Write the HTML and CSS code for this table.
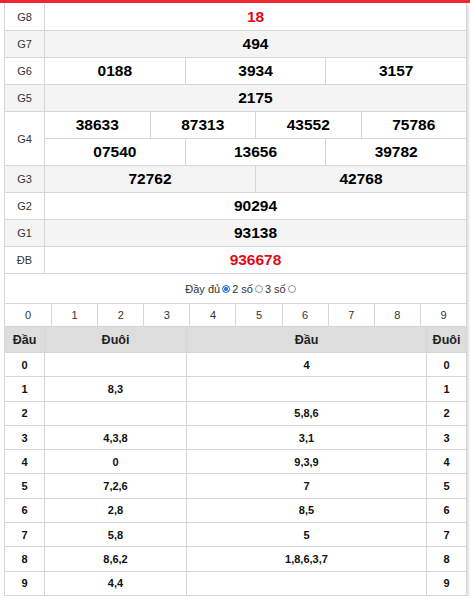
FILE: index.html
```html
<!DOCTYPE html>
<html lang="vi">
<head>
<meta charset="utf-8">
<title>Kết quả</title>
<link rel="stylesheet" href="styles.css">
</head>
<body>
<div class="topbar"></div>
<div class="box">
  <div class="prizes">
    <div class="prize">
      <div class="lbl">G8</div>
      <div class="vals"><div class="line"><div class="num red">18</div></div></div>
    </div>
    <div class="prize alt">
      <div class="lbl">G7</div>
      <div class="vals"><div class="line"><div class="num">494</div></div></div>
    </div>
    <div class="prize">
      <div class="lbl">G6</div>
      <div class="vals"><div class="line"><div class="num">0188</div><div class="num">3934</div><div class="num">3157</div></div></div>
    </div>
    <div class="prize alt">
      <div class="lbl">G5</div>
      <div class="vals"><div class="line"><div class="num">2175</div></div></div>
    </div>
    <div class="prize">
      <div class="lbl">G4</div>
      <div class="vals">
        <div class="line"><div class="num">38633</div><div class="num">87313</div><div class="num">43552</div><div class="num">75786</div></div>
        <div class="line"><div class="num">07540</div><div class="num">13656</div><div class="num">39782</div></div>
      </div>
    </div>
    <div class="prize alt">
      <div class="lbl">G3</div>
      <div class="vals"><div class="line"><div class="num">72762</div><div class="num">42768</div></div></div>
    </div>
    <div class="prize">
      <div class="lbl">G2</div>
      <div class="vals"><div class="line"><div class="num">90294</div></div></div>
    </div>
    <div class="prize alt">
      <div class="lbl">G1</div>
      <div class="vals"><div class="line"><div class="num">93138</div></div></div>
    </div>
    <div class="prize">
      <div class="lbl">ĐB</div>
      <div class="vals"><div class="line"><div class="num red">936678</div></div></div>
    </div>
  </div>

  <div class="options">
    <span>Đầy đủ</span><span class="radio on"></span><span>2 số</span><span class="radio"></span><span>3 số</span><span class="radio"></span>
  </div>

  <div class="digits">
    <div class="d">0</div><div class="d">1</div><div class="d">2</div><div class="d">3</div><div class="d">4</div>
    <div class="d">5</div><div class="d">6</div><div class="d">7</div><div class="d">8</div><div class="d">9</div>
  </div>

  <div class="lt">
    <div class="lt-row head"><div class="c">Đầu</div><div class="c">Đuôi</div><div class="c">Đầu</div><div class="c">Đuôi</div></div>
    <div class="lt-row"><div class="c">0</div><div class="c"></div><div class="c">4</div><div class="c">0</div></div>
    <div class="lt-row"><div class="c">1</div><div class="c">8,3</div><div class="c"></div><div class="c">1</div></div>
    <div class="lt-row"><div class="c">2</div><div class="c"></div><div class="c">5,8,6</div><div class="c">2</div></div>
    <div class="lt-row"><div class="c">3</div><div class="c">4,3,8</div><div class="c">3,1</div><div class="c">3</div></div>
    <div class="lt-row"><div class="c">4</div><div class="c">0</div><div class="c">9,3,9</div><div class="c">4</div></div>
    <div class="lt-row"><div class="c">5</div><div class="c">7,2,6</div><div class="c">7</div><div class="c">5</div></div>
    <div class="lt-row"><div class="c">6</div><div class="c">2,8</div><div class="c">8,5</div><div class="c">6</div></div>
    <div class="lt-row"><div class="c">7</div><div class="c">5,8</div><div class="c">5</div><div class="c">7</div></div>
    <div class="lt-row"><div class="c">8</div><div class="c">8,6,2</div><div class="c">1,8,6,3,7</div><div class="c">8</div></div>
    <div class="lt-row last"><div class="c">9</div><div class="c">4,4</div><div class="c"></div><div class="c">9</div></div>
  </div>
</div>
</body>
</html>
```

FILE: styles.css
```css
* { box-sizing: border-box; }
html, body { margin: 0; padding: 0; background: #fff; }
body { font-family: "Liberation Sans", Arial, sans-serif; color: #111; }

.topbar { height: 3px; background: #f0252f; }

.box {
  margin-left: 4px;
  width: 463px;
  padding-top: 1px;
  border-left: 1px solid #d6d6d6;
  border-right: 1px solid #d6d6d6;
  border-bottom: 1px solid #d6d6d6;
  box-shadow: 2px 2px 2px rgba(0, 0, 0, 0.12);
}

.prize { display: flex; border-bottom: 1px solid #d6d6d6; background: #fff; }
.prize.alt { background: #f4f4f4; }
.lbl {
  width: 40px;
  flex: none;
  border-right: 1px solid #d6d6d6;
  display: flex;
  align-items: center;
  justify-content: center;
  font-size: 11px;
  color: #333;
}
.vals { flex: 1; display: flex; flex-direction: column; min-width: 0; }
.line { display: flex; height: 26px; }
.line + .line { border-top: 1px solid #d6d6d6; height: 27px; }
.num {
  flex: 1 1 0;
  display: flex;
  align-items: center;
  justify-content: center;
  font-weight: bold;
  font-size: 15.5px;
  color: #000;
}
.num + .num { border-left: 1px solid #d6d6d6; }
.num.red { color: #e20a17; }

.options {
  height: 29px;
  display: flex;
  align-items: center;
  justify-content: center;
  gap: 2px;
  font-size: 11px;
  color: #333;
  padding-left: 10px;
}
.radio {
  width: 8px;
  height: 8px;
  border-radius: 50%;
  border: 1px solid #9a9a9a;
  background: #fff;
  display: inline-block;
}
.radio.on {
  border-color: #2f7de1;
  background: radial-gradient(circle, #2f7de1 0 2px, #fff 2.2px 2.6px, #2f7de1 3px);
}

.digits {
  display: grid;
  grid-template-columns: repeat(10, 1fr);
  border-top: 1px solid #d6d6d6;
  border-bottom: 1px solid #d6d6d6;
}
.d {
  height: 22px;
  display: flex;
  align-items: center;
  justify-content: center;
  font-size: 11px;
  color: #333;
}
.d + .d { border-left: 1px solid #d6d6d6; }

.lt-row {
  display: grid;
  grid-template-columns: 40px 142px 240px 1fr;
  border-bottom: 1px solid #d6d6d6;
  height: 24.3px;
}
.lt-row.last { border-bottom: none; height: 23.3px; }
.lt-row.head { background: #dddddd; height: 26px; }
.c {
  display: flex;
  align-items: center;
  justify-content: center;
  font-weight: bold;
  font-size: 11px;
  color: #111;
  border-right: 1px solid #d6d6d6;
}
.c:last-child { border-right: none; }
.head .c { font-size: 12.5px; color: #222; }
```
